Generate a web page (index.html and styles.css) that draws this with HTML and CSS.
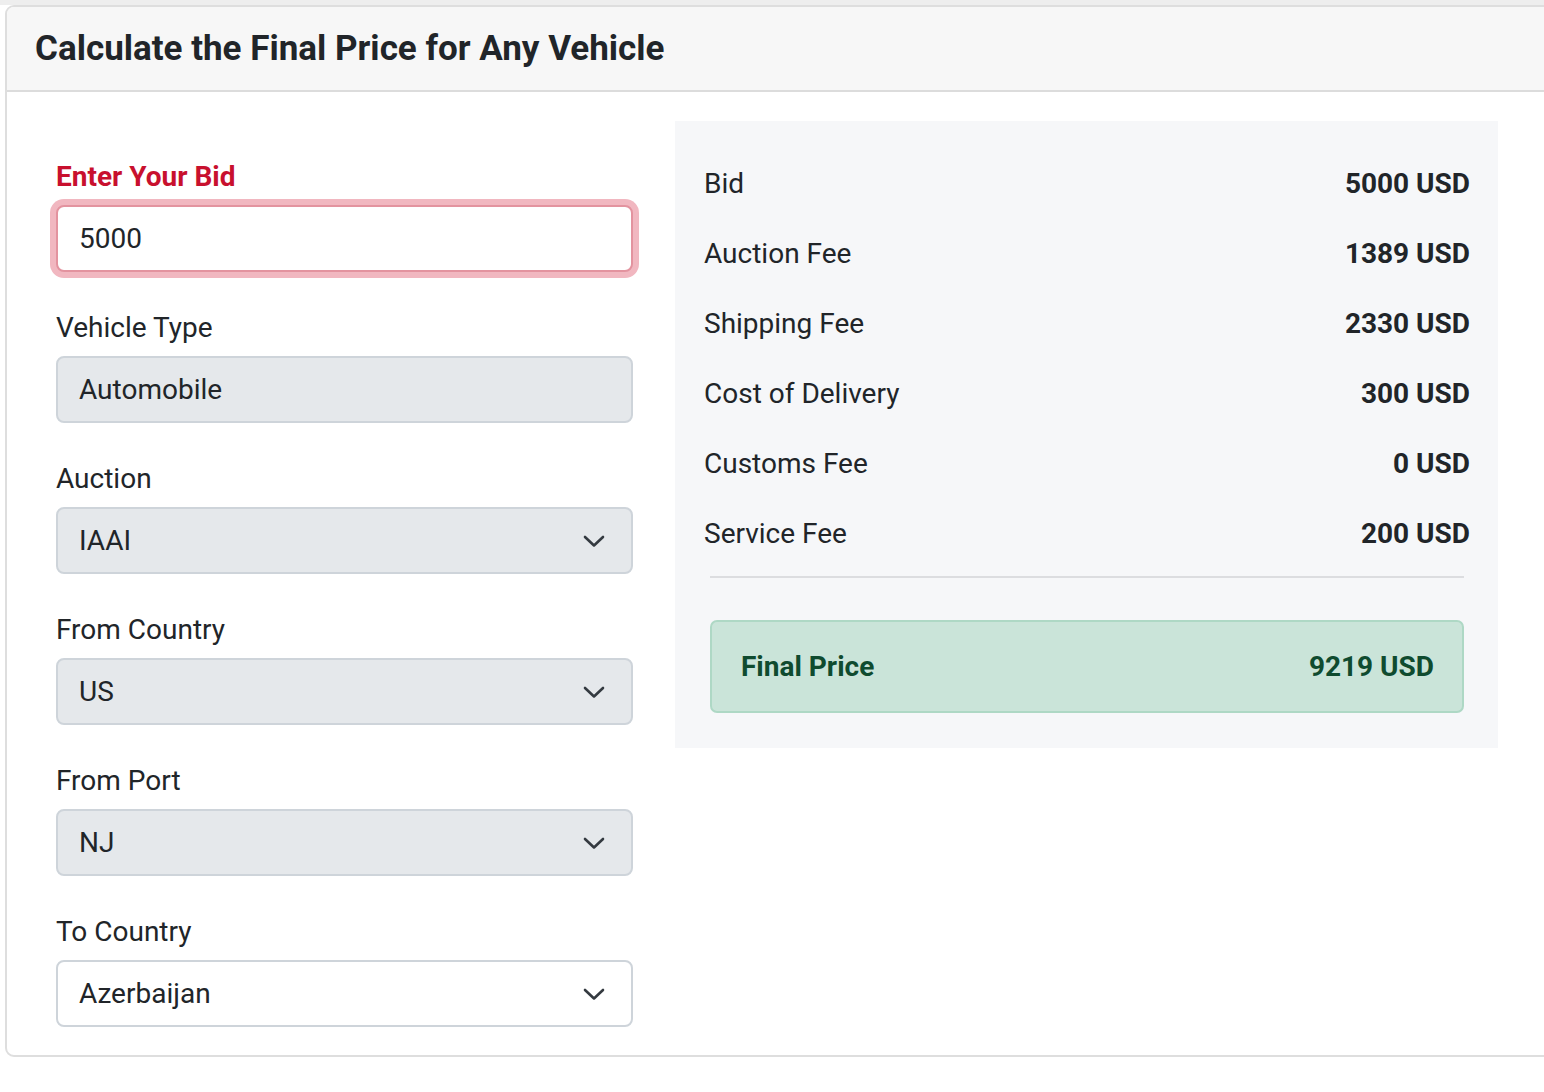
FILE: index.html
```html
<!DOCTYPE html>
<html lang="en">
<head>
<meta charset="utf-8">
<title>Calculate the Final Price</title>
<link rel="stylesheet" href="styles.css">
</head>
<body>
<div class="topstrip"></div>
<div class="card">
  <div class="card-header">Calculate the Final Price for Any Vehicle</div>
  <div class="card-body">
    <div class="form-col">
      <div class="group">
        <label class="label label-bid" for="bid">Enter Your Bid</label>
        <input id="bid" class="control control-focus" type="text" value="5000">
      </div>
      <div class="group">
        <div class="label">Vehicle Type</div>
        <div class="control control-gray">Automobile</div>
      </div>
      <div class="group">
        <div class="label">Auction</div>
        <div class="control control-gray select"><span>IAAI</span><svg class="chev" width="22" height="13" viewBox="0 0 22 13"><path d="M2 2 L11 10.5 L20 2" fill="none" stroke="#343a40" stroke-width="2.6" stroke-linecap="round" stroke-linejoin="round"/></svg></div>
      </div>
      <div class="group">
        <div class="label">From Country</div>
        <div class="control control-gray select"><span>US</span><svg class="chev" width="22" height="13" viewBox="0 0 22 13"><path d="M2 2 L11 10.5 L20 2" fill="none" stroke="#343a40" stroke-width="2.6" stroke-linecap="round" stroke-linejoin="round"/></svg></div>
      </div>
      <div class="group">
        <div class="label">From Port</div>
        <div class="control control-gray select"><span>NJ</span><svg class="chev" width="22" height="13" viewBox="0 0 22 13"><path d="M2 2 L11 10.5 L20 2" fill="none" stroke="#343a40" stroke-width="2.6" stroke-linecap="round" stroke-linejoin="round"/></svg></div>
      </div>
      <div class="group">
        <div class="label">To Country</div>
        <div class="control select"><span>Azerbaijan</span><svg class="chev" width="22" height="13" viewBox="0 0 22 13"><path d="M2 2 L11 10.5 L20 2" fill="none" stroke="#343a40" stroke-width="2.6" stroke-linecap="round" stroke-linejoin="round"/></svg></div>
      </div>
    </div>
    <div class="summary">
      <div class="rows">
        <div class="row"><span>Bid</span><b>5000 USD</b></div>
        <div class="row"><span>Auction Fee</span><b>1389 USD</b></div>
        <div class="row"><span>Shipping Fee</span><b>2330 USD</b></div>
        <div class="row"><span>Cost of Delivery</span><b>300 USD</b></div>
        <div class="row"><span>Customs Fee</span><b>0 USD</b></div>
        <div class="row"><span>Service Fee</span><b>200 USD</b></div>
      </div>
      <div class="divider"></div>
      <div class="final"><span>Final Price</span><span>9219 USD</span></div>
    </div>
  </div>
</div>
</body>
</html>
```
FILE: styles.css
```css
html, body {
  margin: 0;
  padding: 0;
  overflow: hidden;
  background: #ffffff;
}
body {
  font-family: Roboto, "Liberation Sans", Arial, sans-serif;
  color: #212529;
  width: 1544px;
  height: 1092px;
}
.topstrip {
  height: 5px;
  background: #eeeeee;
}
.card {
  margin-left: 5px;
  width: 1580px;
  border: 2px solid #dedede;
  border-radius: 9px;
  overflow: hidden;
}
.card-header {
  background: #f7f7f7;
  border-bottom: 2px solid #dcdcdc;
  font-size: 35px;
  font-weight: 700;
  line-height: 42px;
  padding: 21px 28px 20px 28px;
  color: #212529;
}
.card-body {
  display: flex;
  gap: 42px;
  padding: 29px 0 0 49px;
}
.form-col {
  width: 577px;
  padding-top: 28px;
}
.group {
  margin-bottom: 28px;
}
.label {
  display: block;
  font-size: 28px;
  line-height: 42px;
  padding-top: 7px;
  margin-bottom: 7px;
  color: #212529;
}
.label-bid {
  color: #c8102e;
  font-weight: 700;
}
.control {
  box-sizing: border-box;
  display: flex;
  align-items: center;
  width: 577px;
  height: 67px;
  padding: 0 26px 0 21px;
  border: 2px solid #ced4da;
  border-radius: 8px;
  background: #ffffff;
  font-family: Roboto, "Liberation Sans", Arial, sans-serif;
  font-size: 28px;
  line-height: 42px;
  color: #212529;
  margin: 0;
}
.control-focus {
  border-color: #e3939f;
  box-shadow: 0 0 0 6px #f1b7c0;
  outline: none;
}
.control-gray {
  background: #e5e8eb;
}
.select {
  justify-content: space-between;
}
.chev {
  display: block;
  margin-top: 2px;
}
.summary {
  width: 823px;
  align-self: flex-start;
  box-sizing: border-box;
  background: #f6f7f9;
  padding: 27px 34px 35px 35px;
}
.rows {
  margin: 0 -6px;
}
.row {
  display: flex;
  justify-content: space-between;
  align-items: center;
  height: 70px;
  font-size: 28px;
}
.row b {
  font-weight: 700;
}
.divider {
  margin-top: 8px;
  height: 2px;
  background: #dcdde0;
}
.final {
  margin-top: 42px;
  display: flex;
  justify-content: space-between;
  align-items: center;
  border: 2px solid #aed8c5;
  border-radius: 7px;
  background: #cae4d9;
  color: #0f4b2f;
  font-size: 28px;
  font-weight: 700;
  line-height: 42px;
  padding: 24px 28px 23px 29px;
}
```
